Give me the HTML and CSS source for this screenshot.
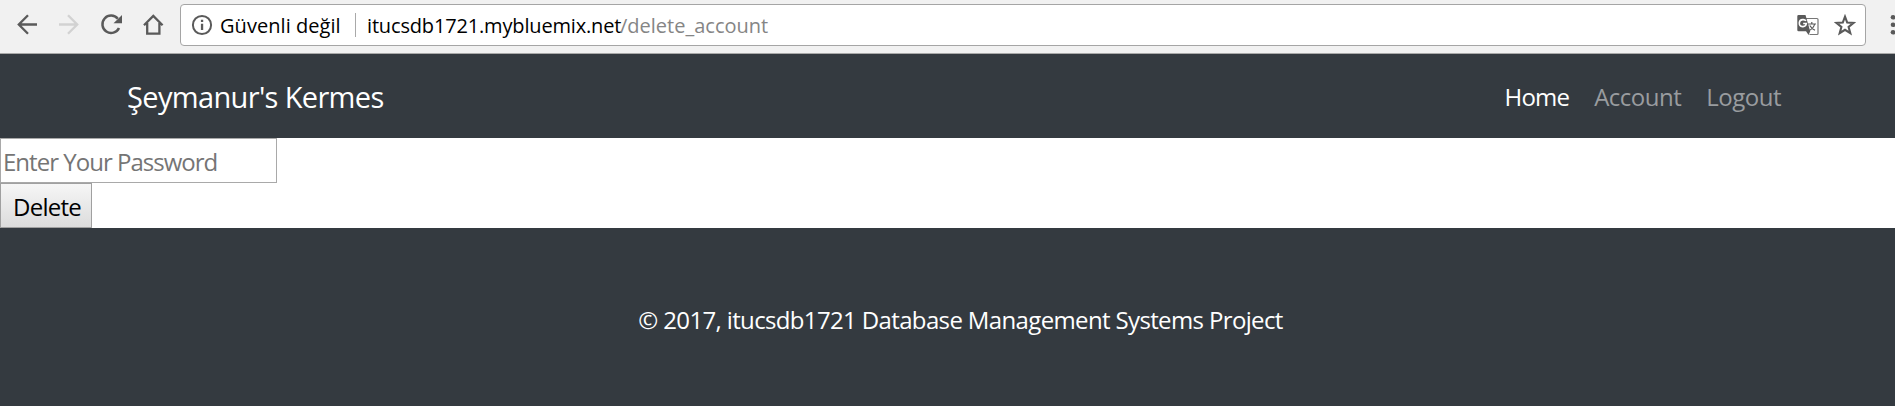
FILE: index.html
```html
<!DOCTYPE html>
<html lang="tr">
<head>
<meta charset="utf-8">
<title>Şeymanur's Kermes</title>
<link rel="stylesheet" href="styles.css">
</head>
<body>
<div class="toolbar">
  <svg class="tools" width="166" height="28" viewBox="0 0 166 28" fill="none" stroke="#5a5a5a" stroke-width="2.3">
    <path d="M20 14.5H2M11 5.2L1.8 14.5L11 23.7"/>
    <path stroke="#d2d2d2" d="M42 14.5H60M51 5.2L60.2 14.5L51 23.7"/>
    <path stroke-width="2.5" d="M102 18A8.7 8.7 0 1 1 100.8 8.7"/>
    <path fill="#5a5a5a" stroke="none" d="M105 5V13.3H96.5Z"/>
    <path d="M127 15.2L136.3 5.9L145.6 15.2M130.2 13V23.6H142.4V13"/>
  </svg>
  <div class="address">
    <svg class="info" width="22" height="22" viewBox="0 0 22 22"><circle cx="11" cy="11" r="9.1" fill="none" stroke="#5a5a5a" stroke-width="2"/><path fill="#5a5a5a" d="M9.9 5.7h2.3V8H9.9zM9.9 9.8h2.3V16H9.9z"/></svg>
    <span class="security">Güvenli değil</span>
    <span class="divider"></span>
    <span class="domain">itucsdb1721.mybluemix.net</span><span class="path">/delete_account</span>
    <svg class="translate" width="22" height="22" viewBox="0 0 22 22">
      <path d="M9 4.5H20Q21 4.5 21 5.5V19.5Q21 20.5 20 20.5H12.5" fill="none" stroke="#777" stroke-width="1.2"/>
      <path d="M1.5 1H8.5L13.2 17.3H1.5Q.3 17.3 .3 16V2.2Q.3 1 1.5 1ZM9 17.3H13.2L11.6 21Z" fill="#5a5a5a"/>
      <path d="M9 6.9Q8 5.5 6 5.6A3.5 3.5 0 1 0 9.3 9.5H6.2" fill="none" stroke="#fff" stroke-width="1.6"/>
      <path d="M11 10H19M14.8 8V10M17.6 10Q16.8 14 12.7 16.3M12.8 11.5Q14.4 14.5 18 16.3" fill="none" stroke="#5a5a5a" stroke-width="1.2"/>
    </svg>
    <svg class="star" width="22" height="22" viewBox="0 0 22 22"><path d="M11 2.7L13.2 8.6L19.6 8.9L14.6 13L16.3 19.2L11 15.8L5.7 19.2L7.4 13L2.4 8.9L8.8 8.6Z" fill="none" stroke="#5a5a5a" stroke-width="2.1"/></svg>
  </div>
  <svg class="more" width="6" height="22" viewBox="0 0 6 22" fill="#5a5a5a"><circle cx="3" cy="3.3" r="2.3"/><circle cx="3" cy="10.8" r="2.3"/><circle cx="3" cy="18.3" r="2.3"/></svg>
</div>
<nav class="navbar">
  <a class="brand">Şeymanur's Kermes</a>
  <div class="links"><a class="link active">Home</a><a class="link account">Account</a><a class="link logout">Logout</a></div>
</nav>
<form class="form">
  <input class="password" type="password" placeholder="Enter Your Password">
  <button class="delete" type="button">Delete</button>
</form>
<footer class="footer"><p class="copyright">© 2017, itucsdb1721 Database Management Systems Project</p></footer>
</body>
</html>
```
FILE: styles.css
```css
* { box-sizing: border-box; }
body { margin: 0; height: 406px; overflow: hidden; background: #fff; font-family: "Segoe UI", "Open Sans", "Noto Sans", sans-serif; font-size: 24px; white-space: nowrap; }
.toolbar { display: flex; height: 54px; padding-top: 4px; background: #f1f1f1; border-bottom: 1px solid #a9a9a9; overflow: hidden; }
.tools { flex: none; margin: 6px -2px 0 17px; width: 166px; }
.address { flex: none; display: flex; align-items: center; width: 1686px; height: 42px; margin-left: -1px; padding-left: 10px; background: #fff; border: 1px solid #a5a5a5; border-radius: 4px; font-size: 20px; line-height: 38px; }
.info { flex: none; }
.security { width: 135px; margin-left: 7px; padding-top: 2px; letter-spacing: .05px; }
.divider { width: 1px; height: 24px; margin-right: 11px; background: #a9a9a9; }
.domain { width: 253px; padding-top: 2px; letter-spacing: -.16px; }
.path { padding-top: 2px; color: #858585; letter-spacing: 0; }
.translate { margin-left: auto; }
.star { margin: 0 9px 0 15px; }
.more { flex: none; margin: 10px 0 0 24px; }
.navbar { display: flex; align-items: center; justify-content: space-between; height: 84px; padding: 0 114px 0 127px; background: #343a40; color: #fff; }
.brand { font-size: 29px; line-height: 45px; letter-spacing: -.65px; }
.links { display: flex; line-height: 36px; padding-top: 1px; gap: 25px; }
.link { color: #999c9f; letter-spacing: -.5px; }
.link.active { color: #fff; letter-spacing: -.8px; }
.form { display: flex; flex-direction: column; align-items: flex-start; height: 90px; }
.password { width: 277px; height: 45px; padding: 2px 2px 0; border: 1px solid #a9a9a9; font: inherit; letter-spacing: -.98px; }
.password::placeholder { color: #757575; opacity: 1; }
.delete { width: 92px; height: 45px; padding: 2px 0 0 2px; border: 1px solid #a0a0a0; border-radius: 0; background: linear-gradient(#f6f6f6, #dcdcdc); color: #000; font: inherit; letter-spacing: -.75px; }
.footer { height: 178px; padding-top: 74px; background: #343a40; color: #fff; }
.copyright { margin: 0; padding-left: 26px; line-height: 36px; text-align: center; letter-spacing: -.64px; }
```
